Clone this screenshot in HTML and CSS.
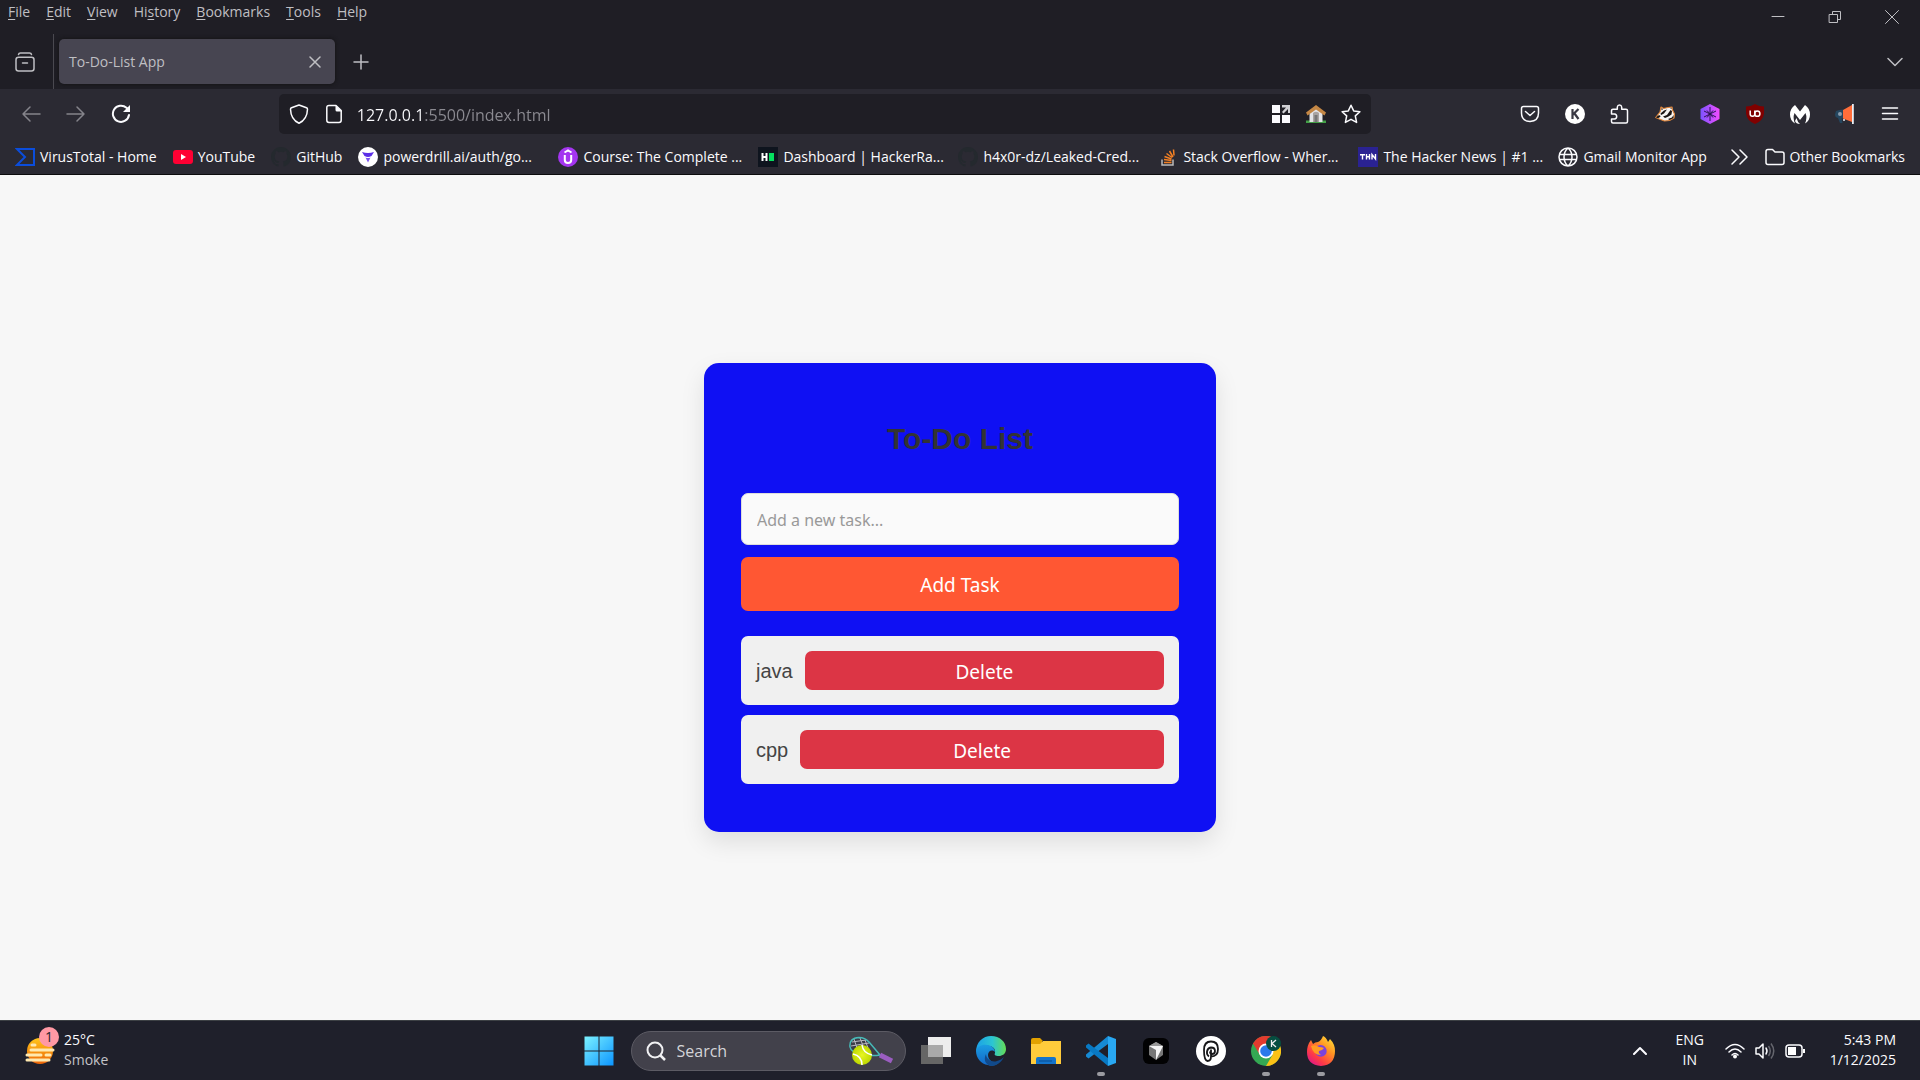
FILE: index.html
```html
<!DOCTYPE html>
<html lang="en">
<head>
<meta charset="utf-8">
<meta name="viewport" content="width=device-width, initial-scale=1">
<title>To-Do-List App</title>
<link rel="stylesheet" href="styles.css">
</head>
<body>
<div class="desktop">
  <header class="browser">
    <div class="titlebar">
      <nav class="menus" aria-label="Menu bar">
        <button class="menu"><u>F</u>ile</button>
        <button class="menu"><u>E</u>dit</button>
        <button class="menu"><u>V</u>iew</button>
        <button class="menu">Hi<u>s</u>tory</button>
        <button class="menu"><u>B</u>ookmarks</button>
        <button class="menu"><u>T</u>ools</button>
        <button class="menu"><u>H</u>elp</button>
      </nav>
      <div class="window-buttons">
        <button class="window-button" aria-label="Minimize"><svg width="14" height="14" viewBox="0 0 14 14"><path d="M1 6.500h12" class="thin"/></svg></button>
        <button class="window-button" aria-label="Restore"><svg width="14" height="14" viewBox="0 0 14 14"><path d="M1.500 4.500h8v8h-8zM4.500 4.500v-3h8v8h-3" class="thin"/></svg></button>
        <button class="window-button" aria-label="Close"><svg width="14" height="14" viewBox="0 0 14 14"><path d="M.5.5l13 13M13.500.5l-13 13" class="thin"/></svg></button>
      </div>
    </div>

    <div class="tabstrip">
      <button class="history-button" aria-label="View recent browsing"><svg width="20" height="20" viewBox="0 0 20 20"><path d="M3.500 2.500q.3-1.500 2-1.500h9q1.700 0 2 1.500M3.500 5.300h13q2.500 0 2.500 2.500v8.700q0 2.500-2.500 2.500h-13q-2.500 0-2.500-2.500v-8.700q0-2.500 2.500-2.500zM7.500 11h5" class="line"/></svg></button>
      <div class="tab">
        <span>To-Do-List App</span>
        <button class="tab-close" aria-label="Close tab"><svg width="12" height="12" viewBox="0 0 12 12"><path d="M1 1l10 10M11 1L1 11" class="line"/></svg></button>
      </div>
      <button class="new-tab" aria-label="New tab"><svg width="16" height="16" viewBox="0 0 16 16"><path d="M8 1v14M1 8h14" class="line"/></svg></button>
      <button class="list-tabs" aria-label="List all tabs"><svg width="16" height="10" viewBox="0 0 16 10"><path d="M1 1.500l7 7 7-7" class="line"/></svg></button>
    </div>

    <div class="toolbar">
      <button class="tool off" aria-label="Back"><svg width="20" height="20" viewBox="0 0 20 20"><path d="M19 10H2M9 3l-7 7 7 7" class="line"/></svg></button>
      <button class="tool off" aria-label="Forward"><svg width="20" height="20" viewBox="0 0 20 20"><path d="M1 10h17M11 3l7 7-7 7" class="line"/></svg></button>
      <button class="tool" aria-label="Reload"><svg width="20" height="20" viewBox="0 0 20 20"><path d="M18 11a8.100 8.100 0 1 1-2.500-7.200l1.500 1.500" class="line bold"/><path d="M19 1v7h-7z" fill="currentColor"/></svg></button>
      <span class="spring"></span>
      <div class="address">
        <button class="address-button" aria-label="Tracking protection"><svg width="20" height="20" viewBox="0 0 20 20"><path d="M10 1l7.500 2.800c.8.300 1 .8 1 1.500C18.300 12 15 17 10 19.300 5 17 1.700 12 1.500 5.300c0-.7.2-1.200 1-1.500z" class="line"/></svg></button>
        <button class="address-button" aria-label="Site information"><svg width="20" height="20" viewBox="0 0 20 20"><path d="M12 1.500H5Q2.800 1.500 2.800 3.700v12.600q0 2.200 2.200 2.200h10q2.200 0 2.200-2.200V6.500z" class="line"/><path d="M11.500 1L18 7.500h-5q-1.500 0-1.500-1.500z" fill="currentColor"/></svg></button>
        <input class="url" type="text" value="127.0.0.1:5500/index.html" aria-label="Address">
        <button class="address-button" aria-label="Extensions grid"><svg width="18" height="18" viewBox="0 0 18 18"><path d="M0 0h8v8H0zM0 10h8v8H0zM10 10h8v8h-8z" fill="#fbfbfe"/><path d="M10 0h8v8h-2V4l-4.500 4.500-1.500-1.500L14 2.500h-4z" fill="#d0d0d4"/></svg></button>
        <button class="address-button" aria-label="Home page"><svg width="20" height="18" viewBox="0 0 20 18"><path d="M0 15.500h20V18H0z" fill="#43a047"/><path d="M3.500 7L10 2l6.500 5v10h-13z" fill="#e4e5e8"/><path d="M10 0l10 7.500-1.500 3L10 4.500l-8.500 6L0 7.500z" fill="#c48745"/><path d="M7 8q3-2.500 6 0v9H7z" fill="#a9a4a2"/><path d="M8.500 10h3v7h-3z" fill="#777"/></svg></button>
        <button class="address-button" aria-label="Bookmark this page"><svg width="20" height="20" viewBox="0 0 20 20"><path d="M10 1.200l2.700 5.700 6.200.8-4.600 4.200 1.300 6.500-5.600-3.100-5.600 3.100 1.300-6.500L1.100 7.700l6.200-.8z" class="line"/></svg></button>
      </div>
      <span class="spring"></span>
      <button class="tool" aria-label="Save to Pocket"><svg width="20" height="20" viewBox="0 0 20 20"><path d="M3.500 2.500h13q2 0 2 2v4.500q0 8-8.500 8.500Q1.500 17 1.500 9V4.500q0-2 2-2zM5.500 7.500l4.500 4 4.500-4" class="line"/></svg></button>
      <button class="tool" aria-label="Account"><svg width="20" height="20" viewBox="0 0 20 20"><circle cx="10" cy="10" r="10" fill="#fff"/><path d="M7.500 5v10M13.500 5l-5.500 5.500M9.500 9.500L13.500 15" stroke="#3a3944" stroke-width="2.200" fill="none"/></svg></button>
      <button class="tool" aria-label="Extensions"><svg width="20" height="20" viewBox="0 0 20 20"><path d="M1.500 10V6.500Q1.500 5.300 3 5.300h4.300V3q.3-2 2.200-2t2.200 2v2.300H16q1.500 0 1.500 1.500V17.500q0 1.500-1.500 1.500H3q-1.500 0-1.500-1.500V15H4.500q2.200-.3 2.200-2.500T4.500 10z" class="line"/></svg></button>
      <button class="tool" aria-label="Privacy Badger"><svg width="20" height="20" viewBox="0 0 20 20"><path d="M.7 13.500L5 8l1-5 2.500 1.500L13 3.500l4-.5.5 3 2 4-.5 4-4.500 2.500-5 .5-4-1.500z" fill="#f7f4f1" stroke="#df8438" stroke-width="1.200" stroke-linejoin="round"/><path d="M1 13.500l2-2 2-.2.500 1.500-2.500 1.500zM5.500 9.500L9 6.500l3-1-3 4-3 1.500zM8 12.500l4-1.500 3.500-5 1.500 1-.5 3.500-3 2-3.500 1.500zM6.500 4l1.500 1.200-1.500 1zM15 4l1.500-.3V5zM13 15l4-1.500 1.500-2.500v3L14.500 16z" fill="#1b1512"/></svg></button>
      <button class="tool" aria-label="Shortcut extension"><svg width="20" height="20" viewBox="0 0 20 20"><defs><linearGradient id="hexagon"><stop stop-color="#7b53ff"/><stop offset="1" stop-color="#f24cff"/></linearGradient></defs><path d="M10 0l9.500 5v10L10 20 .5 15V5z" fill="url(#hexagon)"/><path d="M10 3v14M4 7l12 6M16 7L4 13M7 6.500L10 10l3-3.500M7 13.500L10 10l3 3.500" stroke="#2b1453" fill="none"/></svg></button>
      <button class="tool" aria-label="uBlock Origin"><svg width="20" height="20" viewBox="0 0 20 20"><path d="M10 0q4 2.500 9 2.500v7Q18 17 10 20 2 17 1 9.500v-7Q6 2.500 10 0z" fill="#800000"/><path d="M5.200 6.500v3.500q0 2.300 2.300 2.300t2.300-2.300V6.500" stroke="#fff" stroke-width="1.500" fill="none"/><circle cx="12.300" cy="9.700" r="2.600" stroke="#fff" stroke-width="1.500" fill="none"/></svg></button>
      <button class="tool" aria-label="Malwarebytes"><svg width="20" height="20" viewBox="0 0 20 20"><path d="M5 1l5 6.500L15 1q5 3.500 5 9.500t-5 9q2.500-5.500.5-10.500L10 16 4.500 9q-2 5 .5 10.500-5-3-5-9T5 1zM6.500 14q1 4 3.500 6-4-.2-5-3z" fill="#fff"/></svg></button>
      <button class="tool" aria-label="Announcements"><svg width="20" height="20" viewBox="0 0 20 20"><path d="M1 7q3-1.500 7-1.500v9H6.500l1 4.500H5l-2-5Q0 13.500 0 10.500z" fill="#24465f"/><circle cx="5" cy="10" r="2" fill="#8b9bac"/><path d="M8 6l9-5v17l-9-3.500z" fill="#ff6d3a"/><path d="M17 0h1.800v20H17z" fill="#e9eef5"/><circle cx="9" cy="16" r="1" fill="#e9eef5"/></svg></button>
      <button class="tool" aria-label="Open application menu"><svg width="20" height="20" viewBox="0 0 20 20"><path d="M2.500 4h15M2.500 9.500h15M2.500 15h15" class="line"/></svg></button>
    </div>

    <nav class="bookmarks" aria-label="Bookmarks">
      <a class="bookmark" href="#"><svg width="20" height="20" viewBox="0 0 20 20"><path d="M2 2h17v16H2l8-8z" fill="none" stroke="#0b4ddb" stroke-width="2"/></svg><span>VirusTotal - Home</span></a>
      <a class="bookmark" href="#"><svg width="20" height="20" viewBox="0 0 20 20"><rect y="3" width="20" height="14" rx="3" fill="#ff0033"/><path d="M8 7l5 3-5 3z" fill="#fff"/></svg><span>YouTube</span></a>
      <a class="bookmark" href="#"><svg width="20" height="20" viewBox="0 0 16 16"><path fill="#24292e" d="M8 0C3.580 0 0 3.580 0 8c0 3.540 2.290 6.530 5.470 7.590.4.070.55-.17.55-.38 0-.19-.01-.82-.01-1.490-2.010.37-2.530-.49-2.690-.94-.09-.23-.48-.94-.82-1.130-.28-.15-.68-.52-.01-.53.63-.01 1.080.58 1.230.82.72 1.210 1.870.87 2.330.66.07-.52.28-.87.51-1.070-1.780-.2-3.640-.89-3.640-3.950 0-.87.31-1.590.82-2.150-.08-.2-.36-1.020.08-2.120 0 0 .67-.21 2.200.82a7.600 7.600 0 0 1 4 0c1.530-1.040 2.200-.82 2.200-.82.44 1.100.16 1.920.08 2.120.51.56.82 1.270.82 2.150 0 3.070-1.870 3.750-3.650 3.950.29.25.54.73.54 1.480 0 1.070-.01 1.930-.01 2.200 0 .21.15.46.55.38A8 8 0 0 0 16 8c0-4.420-3.580-8-8-8z"/></svg><span>GitHub</span></a>
      <a class="bookmark long" href="#"><svg width="20" height="20" viewBox="0 0 20 20"><circle cx="10" cy="10" r="10" fill="#fff"/><path d="M4 5q6 2 12 0l-2.500 4q-3.500 2-7 0z" fill="#5b2ee6"/><path d="M7.500 10.500q2.500 1 5 0L10 15.500z" fill="#7b52f2"/></svg><span>powerdrill.ai/auth/go...</span></a>
      <a class="bookmark long" href="#"><svg width="20" height="20" viewBox="0 0 20 20"><circle cx="10" cy="10" r="10" fill="#a435f0"/><path d="M6.500 5.500L10 3.500l3.500 2M6.800 8v5q0 3 3.200 3t3.200-3V8" stroke="#fff" stroke-width="2" fill="none"/></svg><span>Course: The Complete ...</span></a>
      <a class="bookmark long" href="#"><svg width="20" height="20" viewBox="0 0 20 20"><path d="M0 0h20v20H0z" fill="#0e141e"/><path d="M4.500 6v8M8.500 6v8M4 10h5" stroke="#fff" stroke-width="2"/><path d="M11 6h5v8h-5z" fill="#05e05f"/></svg><span>Dashboard | HackerRa...</span></a>
      <a class="bookmark long" href="#"><svg width="20" height="20" viewBox="0 0 16 16"><path fill="#24292e" d="M8 0C3.580 0 0 3.580 0 8c0 3.540 2.290 6.530 5.470 7.590.4.070.55-.17.55-.38 0-.19-.01-.82-.01-1.490-2.010.37-2.530-.49-2.690-.94-.09-.23-.48-.94-.82-1.130-.28-.15-.68-.52-.01-.53.63-.01 1.080.58 1.230.82.72 1.210 1.870.87 2.330.66.07-.52.28-.87.51-1.070-1.780-.2-3.640-.89-3.640-3.950 0-.87.31-1.590.82-2.150-.08-.2-.36-1.020.08-2.120 0 0 .67-.21 2.200.82a7.600 7.600 0 0 1 4 0c1.530-1.040 2.200-.82 2.200-.82.44 1.100.16 1.920.08 2.120.51.56.82 1.270.82 2.150 0 3.070-1.870 3.750-3.650 3.950.29.25.54.73.54 1.480 0 1.070-.01 1.930-.01 2.200 0 .21.15.46.55.38A8 8 0 0 0 16 8c0-4.420-3.580-8-8-8z"/></svg><span>h4x0r-dz/Leaked-Cred...</span></a>
      <a class="bookmark long" href="#"><svg width="20" height="20" viewBox="0 0 20 20"><path d="M4 12.500V18h11v-5.500" fill="none" stroke="#bcbbbb" stroke-width="1.500"/><path d="M6 15.500h7.500M6 12.500l7.500 1M6.500 9.500l7 2.500M8.500 6.500l5.500 4M11.500 4l3.500 6M15.500 2.500l.5 6" stroke="#f48024" stroke-width="1.500"/></svg><span>Stack Overflow - Wher...</span></a>
      <a class="bookmark long" href="#"><svg width="20" height="20" viewBox="0 0 20 20"><path d="M0 0h20v20H0z" fill="#2a2292"/><path d="M2 7.700h5M4.500 7.500v5M8.500 7v5.500M11.500 7v5.500M8.500 9.800h3M14 12.500v-5l3.500 4.500V7" stroke="#fff" stroke-width="1.400" fill="none"/></svg><span>The Hacker News | #1 ...</span></a>
      <a class="bookmark" href="#"><svg width="20" height="20" viewBox="0 0 20 20"><path d="M10 1a9 9 0 1 0 0 18 9 9 0 0 0 0-18zM10 1q-4 3.500-4 9t4 9q4-3.500 4-9t-4-9zM1.500 7.500h17M1.500 12.500h17" class="line"/></svg><span>Gmail Monitor App</span></a>
      <button class="more" aria-label="Show more bookmarks"><svg width="18" height="16" viewBox="0 0 18 16"><path d="M1 1l7 7-7 7M9 1l7 7-7 7" class="line"/></svg></button>
      <a class="bookmark" href="#"><svg width="20" height="20" viewBox="0 0 20 20"><path d="M3 2.500h4.500l2.500 2.500h7q2 0 2 2v8.500q0 2-2 2H3q-2 0-2-2v-11q0-2 2-2z" class="line"/></svg><span>Other Bookmarks</span></a>
    </nav>
  </header>

  <main class="page">
    <section class="todo">
      <h1 class="todo-title">To-Do List</h1>
      <input class="task-input" type="text" placeholder="Add a new task..." aria-label="New task">
      <button class="add-button">Add Task</button>
      <ul class="tasks">
        <li class="task"><span>java</span><button class="delete-button">Delete</button></li>
        <li class="task"><span>cpp</span><button class="delete-button">Delete</button></li>
      </ul>
    </section>
  </main>

  <footer class="taskbar">
    <button class="weather">
      <span class="weather-icon">
        <svg width="30" height="28" viewBox="0 0 30 28"><defs><linearGradient id="sun" x2="0" y2="1"><stop stop-color="#ffc61a"/><stop offset="1" stop-color="#ee6508"/></linearGradient></defs><circle cx="15" cy="14" r="13" fill="url(#sun)"/><g stroke="#ffe9b0" stroke-width="3" stroke-linecap="round"><path d="M7 8h3M6 13h22M2 18h14M21 18h4M2 23h22"/></g></svg>
        <span class="badge">1</span>
      </span>
      <span class="stack"><span>25°C</span><span class="dim">Smoke</span></span>
    </button>

    <div class="apps">
      <button class="app" aria-label="Start"><svg width="30" height="30" viewBox="0 0 30 30"><defs><linearGradient id="win" gradientUnits="userSpaceOnUse" x2="30" y2="30"><stop stop-color="#7df3ff"/><stop offset="1" stop-color="#0a93ff"/></linearGradient></defs><path d="M.5.5h14v14H.5zM15.500.5h14v14h-14zM.5 15.500h14v14H.5zM15.500 15.500h14v14h-14z" fill="url(#win)"/></svg></button>
      <label class="search">
        <svg width="20" height="20" viewBox="0 0 20 20"><circle cx="9" cy="9" r="7.500" fill="none" stroke="#f1f1f3" stroke-width="2"/><path d="M14 14l5 5" stroke="#f1f1f3" stroke-width="2.500"/></svg>
        <input class="search-input" type="text" placeholder="Search" aria-label="Search">
        <svg width="44" height="30" viewBox="0 0 44 30"><defs><radialGradient id="ball"><stop stop-color="#e8f522"/><stop offset="1" stop-color="#bdd800"/></radialGradient></defs><path d="M1 11Q0 2 10 1.500q6 0 10 4.500 6 7 11 13-9 1.500-18-1Q2 17 1 11z" fill="#3b3c48"/><path d="M3 6l14-2M2 10l18-3M5 3l4 12M11 2l4 10M16 4l3 8" stroke="#b8b8c0"/><path d="M1 11Q0 2 10 1.500q6 0 10 4.500 6 7 11 13-9 1.500-18-1Q2 17 1 11z" fill="none" stroke="#47b9b7" stroke-width="1.500"/><path d="M31 19l12 6" stroke="#9a5dc0" stroke-width="5"/><circle cx="13" cy="19" r="10" fill="url(#ball)"/><path d="M4 18q9 2 9 11M13 9q1 8 10 10" stroke="#fff" stroke-width="1.500" fill="none"/></svg>
      </label>
      <button class="app" aria-label="Task view"><svg width="30" height="30" viewBox="0 0 30 30"><path d="M0 9h22v19H0z" fill="#666"/><path d="M7 1h23v20H7z" fill="#ededed"/><path d="M7 9h15v12H7z" fill="#a9a9a9"/></svg></button>
      <button class="app" aria-label="Microsoft Edge"><svg width="30" height="30" viewBox="0 0 30 30"><defs><linearGradient id="edge-top"><stop stop-color="#1ba0e8"/><stop offset=".55" stop-color="#2cc5d2"/><stop offset="1" stop-color="#64dc55"/></linearGradient><linearGradient id="edge-side" x2="0" y2="1"><stop stop-color="#1b9de2"/><stop offset="1" stop-color="#1267c8"/></linearGradient></defs><path d="M15 0c9 0 15 6 15 13 0 5-4 7-7 7-4 0-5-1-4-3 1-5-4-8-9-7-5 0-9 4-10 6C0 6 7 0 15 0z" fill="url(#edge-top)"/><path d="M0 15C1 11 6 8 11 9c5 0 8 4 8 7-3-3-7-1-7 3 0 5 5 8 9 9-3 2-6 2-9 1C5 28 0 22 0 15z" fill="url(#edge-side)"/><path d="M10 18c0 5 6 9 11 7 3-1 5-2 7-4-3 6-8 9-13 9-5-1-8-6-5-12z" fill="#114a8b"/></svg></button>
      <button class="app" aria-label="File Explorer"><svg width="30" height="30" viewBox="0 0 30 30"><path d="M0 4q0-2 2-2h7l3 3h-1v7H0z" fill="#e2a100"/><path d="M0 8h9l3-3h18v23H0z" fill="#ffcb3b"/><path d="M5 28v-5q0-2 2-2h16q2 0 2 2v5z" fill="#1474cb"/><path d="M8 25h13" stroke="#094c91"/></svg></button>
      <button class="app running" aria-label="Visual Studio Code"><svg width="30" height="30" viewBox="0 0 30 30"><path d="M22 0v8L2.500 22.500 0 20.500v-2z" fill="#168ad4"/><path d="M22 30v-8L2.500 7.500 0 9.500v2z" fill="#0879c4"/><path d="M22 0l8 3v24l-8 3z" fill="#29a8f2"/></svg></button>
      <button class="app" aria-label="Cursor"><svg width="26" height="26" viewBox="0 0 26 26"><rect width="26" height="26" rx="6" fill="#020203"/><path d="M13 4l7 4v9l-7 5-7-5V8z" fill="#777"/><path d="M6 8l7-4 7 4z" fill="#999"/><path d="M6 8h14l-7 14V12z" fill="#f5f5f5"/></svg></button>
      <button class="app" aria-label="Pieces"><svg width="30" height="30" viewBox="0 0 30 30"><circle cx="15" cy="15" r="15" fill="#fff"/><path d="M13 20.500q-2.500-1.500-2-5t4-4q4 0 4 3.500 0 3-3 3-2 0-2-2.500M15 13.500v7q0 4.500-3.500 4.500Q8 24.500 8 14q0-8.500 7-8.500T22 13q0 7.500-7 7.500" fill="none" stroke="#18181a" stroke-width="1.800"/></svg></button>
      <button class="app running" aria-label="Google Chrome"><svg width="30" height="30" viewBox="0 0 30 30"><circle cx="15" cy="15" r="15" fill="#34a853"/><path d="M2 7.500A15 15 0 0 1 28 7.500H15v7z" fill="#e33b2e"/><path d="M2 7.500L9 19l6-11.500L8 3z" fill="#e33b2e"/><path d="M28 7.500A15 15 0 0 1 15 30l6.500-11L15 7.500z" fill="#fbc116"/><circle cx="15" cy="15" r="7.500" fill="#fff"/><circle cx="15" cy="15" r="5.800" fill="#2b79ea"/><circle cx="22.500" cy="7.500" r="7.500" fill="#064d40"/><path d="M20.500 4v7M25 4l-4 3.500 4 3.500" stroke="#eee" stroke-width="1.300" fill="none"/></svg></button>
      <button class="app running" aria-label="Firefox"><svg width="30" height="30" viewBox="0 0 30 30"><defs><linearGradient id="fox" x1="1" x2=".2" y2="1"><stop stop-color="#fff03c"/><stop offset=".4" stop-color="#ff9422"/><stop offset=".75" stop-color="#ff3b45"/><stop offset="1" stop-color="#dd168b"/></linearGradient></defs><path d="M5 4l2 4q2-2 5-2 3-1 5-6 3 1 5 6l2-3q5 5 5 12 0 14-14 15Q1 29 1 16q0-7 4-12z" fill="url(#fox)"/><path d="M9 12q4-5 9-2 4 3 2 8-3 4-8 2-4-3-3-8z" fill="#7b42dc"/><path d="M5 10q4-2 8 1 3 0 5 1-2 3-5 3-1 2 2 4-8 0-10-9z" fill="#ff9b22"/></svg></button>
    </div>

    <div class="tray">
      <button class="hidden-icons" aria-label="Show hidden icons"><svg width="14" height="9" viewBox="0 0 14 9"><path d="M1 8l6-6 6 6" class="line bold"/></svg></button>
      <button class="stack center"><span>ENG</span><span>IN</span></button>
      <button class="status" aria-label="Network, volume and battery">
        <svg width="20" height="16" viewBox="0 0 20 16"><path d="M1 6q9-9 18 0M4 9q6-6 12 0M7 12q3-3 6 0" class="line"/><circle cx="10" cy="13.500" r="2" fill="#fff"/></svg>
        <svg width="20" height="18" viewBox="0 0 20 18"><path d="M1 6h3l4-4v14l-4-4H1zM11 6q2 3 0 6" class="line"/><path d="M13.500 4q3.500 5 0 10M16 1.500q5.500 7.500 0 15" stroke="#65666e" fill="none" stroke-width="1.500"/></svg>
        <svg width="20" height="14" viewBox="0 0 20 14"><rect x="1" y="1" width="16" height="12" rx="3" class="line"/><path d="M3 3h8v8H3zM18 5h2v4h-2z" fill="#fff"/></svg>
      </button>
      <button class="clock stack end"><span>5:43 PM</span><span>1/12/2025</span></button>
    </div>
  </footer>
</div>
</body>
</html>
```
FILE: styles.css
```css
* {
  box-sizing: border-box;
}

body {
  margin: 0;
  font-family: "Open Sans", "Noto Sans", sans-serif;
  font-size: 14px;
  line-height: 20px;
  color: #fbfbfe;
}

button,
input {
  margin: 0;
  padding: 0;
  border: 0;
  background: none;
  color: inherit;
  font: inherit;
}

button,
.search {
  cursor: pointer;
}

svg {
  display: block;
  flex: none;
}

.line,
.thin {
  fill: none;
  stroke: currentColor;
  stroke-width: 1.5;
  stroke-linejoin: round;
  stroke-linecap: round;
}

.thin {
  stroke-width: 1;
}

.bold {
  stroke-width: 2;
}

.desktop {
  display: flex;
  flex-direction: column;
  min-height: 100vh;
}

/* Browser chrome */

.browser {
  background: #2b2a33;
  border-bottom: 1px solid #0c0c0d;
}

.titlebar {
  display: flex;
  justify-content: space-between;
  height: 34px;
  padding-left: 8px;
  background: #1f1e25;
  color: #bfbfc3;
}

.menus {
  display: flex;
  gap: 16px;
  align-items: flex-start;
  padding-top: 2px;
}

.menu u {
  text-underline-offset: 2px;
}

.window-buttons {
  display: flex;
}

.window-button {
  display: grid;
  place-items: center;
  width: 57px;
}

.tabstrip {
  display: flex;
  align-items: center;
  height: 55px;
  background: #1f1e25;
  color: #bfbfc3;
}

.history-button {
  display: grid;
  place-items: center;
  width: 54px;
  height: 55px;
  padding-right: 4px;
  border-right: 1px solid #4a4950;
}

.tab {
  display: flex;
  justify-content: space-between;
  align-items: center;
  width: 276px;
  height: 45px;
  margin-left: 5px;
  padding: 0 14px 0 10px;
  border-radius: 5px;
  background: #474551;
  box-shadow: 0 0 4px #111;
}

.new-tab {
  margin-left: 18px;
}

.list-tabs {
  margin-left: auto;
  padding-right: 17px;
}

.toolbar {
  display: flex;
  align-items: center;
  height: 50px;
  padding: 0 8px;
}

.tool {
  display: grid;
  place-items: center;
  flex: none;
  width: 45px;
  height: 40px;
}

.off {
  color: #85848b;
}

.spring {
  flex: 1;
}

.address {
  display: flex;
  flex: 8;
  align-items: center;
  height: 40px;
  padding: 0 3px;
  border-radius: 5px;
  background: #1f1e25;
}

.address-button {
  display: grid;
  place-items: center;
  width: 35px;
  height: 40px;
}

.url {
  flex: 1;
  min-width: 0;
  height: 32px;
  margin-left: 5px;
  padding-top: 2px;
  background: linear-gradient(90deg, #fbfbfe 66px, #8b8a91 66px);
  background-clip: text;
  -webkit-text-fill-color: transparent;
  font-size: 16px;
}

.bookmarks {
  display: flex;
  gap: 16px;
  align-items: center;
  height: 35px;
  padding: 0 15px;
}

.bookmark {
  display: flex;
  gap: 5px;
  align-items: center;
  color: inherit;
  text-decoration: none;
  white-space: nowrap;
}

.long {
  width: 184px;
}

.more {
  margin-left: auto;
}

/* To-do page */

.page {
  display: flex;
  flex: 1;
  justify-content: center;
  align-items: center;
  background: #f7f7f7;
}

.todo {
  display: flex;
  flex-direction: column;
  width: 512px;
  padding: 51px 37px 48px;
  border-radius: 15px;
  background: #0f10f3;
  box-shadow: 0 10px 25px rgba(0, 0, 0, 0.1);
}

.todo-title {
  margin: 0 0 29px;
  color: #333;
  font: bold 30px/50px "Liberation Sans", Arial, sans-serif;
  text-align: center;
}

.task-input {
  height: 52px;
  margin-bottom: 12px;
  padding: 2px 15px 0;
  border: 1px solid #ddd;
  border-radius: 7px;
  background: #fafafa;
  color: #333;
  font: 16px/20px "Noto Sans", sans-serif;
}

.task-input::placeholder {
  color: #999;
}

.add-button,
.delete-button {
  padding-top: 2px;
  border-radius: 7px;
  color: #fff;
  font: 19px/24px "Noto Sans", sans-serif;
}

.add-button {
  height: 54px;
  background: #ff5733;
}

.tasks {
  display: grid;
  gap: 10px;
  margin: 25px 0 0;
  padding: 0;
  list-style: none;
}

.task {
  display: flex;
  gap: 12px;
  align-items: center;
  padding: 15px;
  border-radius: 7px;
  background: #f0f0f0;
  color: #444;
  font: 20px/24px "Liberation Sans", Arial, sans-serif;
}

.delete-button {
  flex: 1;
  height: 39px;
  background: #dc3545;
}

/* Taskbar */

.taskbar {
  display: grid;
  grid-template-columns: 1fr auto 1fr;
  align-items: center;
  height: 60px;
  border-top: 1px solid #3c4044;
  background: #1f202b;
}

.stack {
  display: flex;
  flex-direction: column;
  align-items: flex-start;
  padding-bottom: 2px;
}

.center {
  align-items: center;
}

.end {
  align-items: flex-end;
}

.dim {
  color: #c3c3c8;
}

.weather {
  display: flex;
  gap: 9px;
  align-items: center;
  justify-self: start;
  margin-left: 25px;
}

.weather-icon {
  position: relative;
}

.badge {
  position: absolute;
  top: -10px;
  right: -4px;
  width: 20px;
  height: 20px;
  border-radius: 50%;
  background: #ff99a4;
  color: #26262b;
  font-size: 14px;
}

.apps {
  display: flex;
  align-items: center;
}

.app {
  position: relative;
  display: grid;
  place-items: center;
  width: 55px;
  height: 58px;
}

.running::after {
  content: "";
  position: absolute;
  bottom: 4px;
  left: 23px;
  width: 8px;
  height: 4px;
  border-radius: 2px;
  background: #9b9ba1;
}

.search {
  display: flex;
  align-items: center;
  width: 275px;
  height: 40px;
  margin: 0 3px 0 4px;
  padding: 0 12px 0 14px;
  border: 1px solid #5c5b64;
  border-radius: 20px;
  background: #42414b;
}

.search-input {
  flex: 1;
  min-width: 0;
  margin-left: 11px;
  font-size: 16px;
}

.search-input::placeholder {
  color: #d4d4d8;
}

.tray {
  display: flex;
  gap: 21px;
  align-items: center;
  justify-self: end;
  margin-right: 24px;
}

.hidden-icons {
  padding: 8px;
}

.status {
  display: flex;
  gap: 10px;
  align-items: center;
}

.clock {
  min-width: 70px;
}
```
